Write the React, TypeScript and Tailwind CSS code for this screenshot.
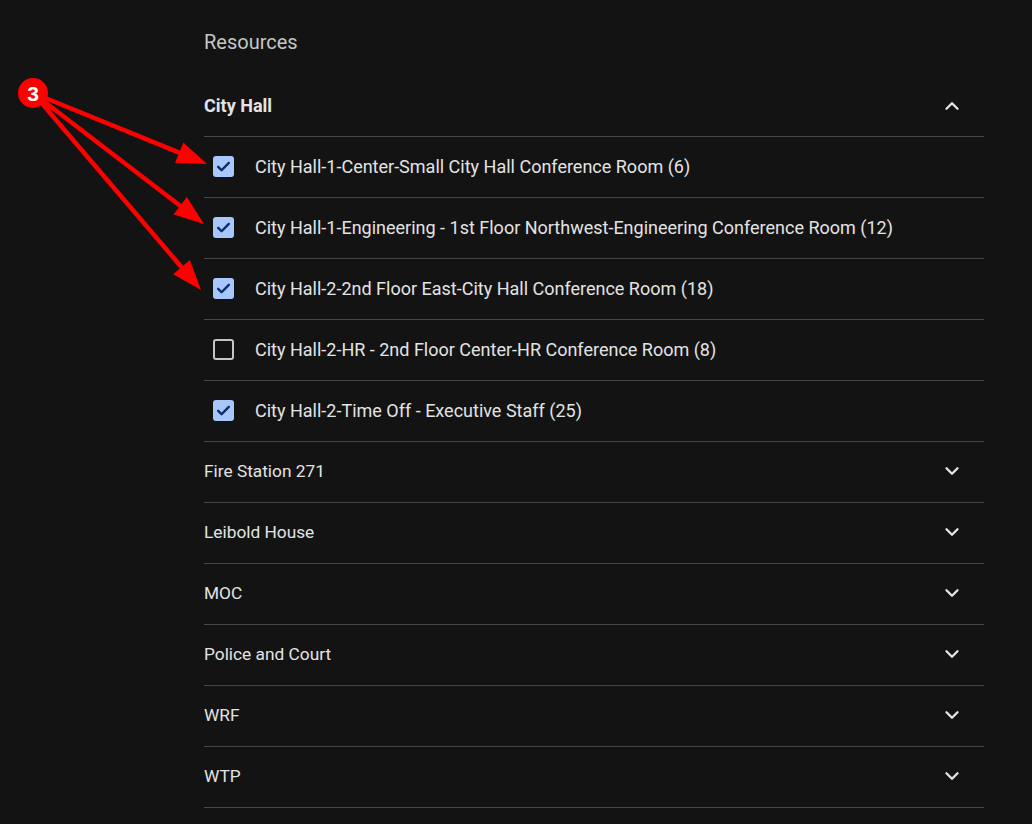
import { ChevronDown, ChevronUp } from "lucide-react";

const rooms = [
  { name: "City Hall-1-Center-Small City Hall Conference Room (6)", checked: true },
  { name: "City Hall-1-Engineering - 1st Floor Northwest-Engineering Conference Room (12)", checked: true },
  { name: "City Hall-2-2nd Floor East-City Hall Conference Room (18)", checked: true },
  { name: "City Hall-2-HR - 2nd Floor Center-HR Conference Room (8)", checked: false },
  { name: "City Hall-2-Time Off - Executive Staff (25)", checked: true },
];

const groups = ["Fire Station 271", "Leibold House", "MOC", "Police and Court", "WRF", "WTP"];

function Checkbox({ checked }: { checked: boolean }) {
  if (!checked) {
    return <div className="h-[21px] w-[21px] shrink-0 rounded-[3px] border-2 border-[#c4c7c5]" />;
  }
  return (
    <div className="flex h-[21px] w-[21px] shrink-0 items-center justify-center rounded-[3px] bg-[#a8c7fa]">
      <svg width="17" height="17" viewBox="0 0 24 24" fill="none">
        <path d="M4.5 12.5l4.8 4.8L19.5 7" stroke="#062e6f" strokeWidth="3.4" strokeLinecap="round" strokeLinejoin="round" />
      </svg>
    </div>
  );
}

function Annotation() {
  const tips = [
    [207, 164],
    [204, 224],
    [201, 290],
  ];
  const sx = 33;
  const sy = 93;
  return (
    <svg className="pointer-events-none absolute left-0 top-0" width="260" height="320">
      {tips.map(([tx, ty], i) => {
        const dx = tx - sx;
        const dy = ty - sy;
        const len = Math.hypot(dx, dy);
        const ux = dx / len;
        const uy = dy / len;
        const headLen = 30;
        const headW = 11;
        const bx = tx - ux * headLen;
        const by = ty - uy * headLen;
        const px = -uy;
        const py = ux;
        return (
          <g key={i}>
            <line x1={sx} y1={sy} x2={bx + ux * 2} y2={by + uy * 2} stroke="#ff0000" strokeWidth="4.5" />
            <polygon
              points={`${tx},${ty} ${bx + px * headW},${by + py * headW} ${bx - px * headW},${by - py * headW}`}
              fill="#ff0000"
            />
          </g>
        );
      })}
      <circle cx={sx} cy={sy} r="15" fill="#ff0000" />
      <text
        x={sx}
        y={sy + 7.5}
        textAnchor="middle"
        fill="#ffffff"
        fontSize="21"
        fontWeight="700"
        fontFamily="'Liberation Sans', Arial, sans-serif"
      >
        3
      </text>
    </svg>
  );
}

export default function App() {
  return (
    <div className="relative min-h-[824px] w-full bg-[#131313] font-['Roboto',sans-serif] text-[#e3e3e3]">
      <Annotation />
      <div className="ml-[204px] w-[780px] pt-[28px]">
        <h1 className="mb-[20px] text-[20px] leading-[28px] text-[#c4c7c5]">Resources</h1>

        <div className="flex h-[61px] items-center justify-between border-b border-[#444746]">
          <span className="text-[18px] font-bold leading-[24px]">City Hall</span>
          <ChevronUp className="mr-[21px] h-[22px] w-[22px] text-[#e3e3e3]" strokeWidth={2.6} />
        </div>

        {rooms.map((r) => (
          <div key={r.name} className="flex h-[61px] items-center gap-[21px] border-b border-[#444746] pb-px pl-[9px]">
            <Checkbox checked={r.checked} />
            <span className="text-[18px] leading-[24px]">{r.name}</span>
          </div>
        ))}

        {groups.map((g) => (
          <div key={g} className="flex h-[61px] items-center justify-between border-b border-[#444746] pb-[3px]">
            <span className="text-[17.3px] leading-[24px]">{g}</span>
            <ChevronDown className="mr-[21px] h-[22px] w-[22px] text-[#e3e3e3]" strokeWidth={2.6} />
          </div>
        ))}
      </div>
    </div>
  );
}
